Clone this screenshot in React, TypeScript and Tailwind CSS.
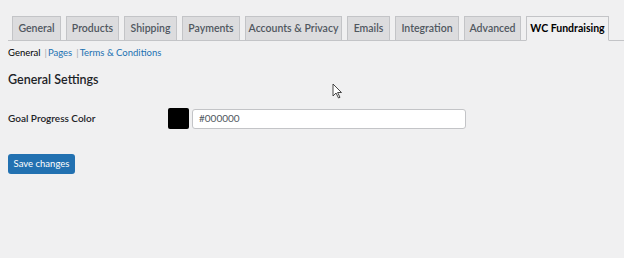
const tabs = [
  { label: 'General', w: 'w-[49px]' },
  { label: 'Products', w: 'w-[53px]' },
  { label: 'Shipping', w: 'w-[53px]' },
  { label: 'Payments', w: 'w-[58px]' },
  { label: 'Accounts & Privacy', w: 'w-[97px]' },
  { label: 'Emails', w: 'w-[43px]' },
  { label: 'Integration', w: 'w-[64px]' },
  { label: 'Advanced', w: 'w-[57px]' },
]

function Cursor() {
  return (
    <svg className="absolute left-[332px] top-[83px]" width="11" height="16" viewBox="0 0 11 16">
      <path d="M1 1 L1 13 L4 10 L6.5 15 L8 14.3 L5.6 9.5 L9.5 9.5 Z" fill="#fff" stroke="#333" strokeWidth="0.9" strokeLinejoin="round" />
    </svg>
  )
}

export default function App() {
  return (
    <div
      className="relative h-[258px] w-[624px] overflow-hidden bg-[#f0f0f1] text-[#1d2327]"
      style={{ fontFamily: 'Lato, "Noto Sans", sans-serif' }}>
      <div className="mt-[16px] ml-[8px] flex items-end gap-[5px] border-b border-[#c3c4c7] pl-[4px]">
        {tabs.map((t) => (
          <div
            key={t.label}
            className={`${t.w} -mb-px flex h-[25px] items-center justify-center border border-[#c3c4c7] bg-[#dcdcde] text-[10.5px] font-semibold whitespace-nowrap text-[#50575e]`}>
            {t.label}
          </div>
        ))}
        <div className="-mb-px flex h-[25px] w-[83px] items-center justify-center border border-b-[#f0f0f1] border-[#c3c4c7] bg-[#f0f0f1] text-[10.5px] font-bold whitespace-nowrap text-black">
          WC Fundraising
        </div>
      </div>

      <div className="mt-[5px] ml-[8px] flex items-center text-[9.5px] leading-[14px]">
        <span className="text-black">General</span>
        <span className="ml-[4px] mr-[1px] text-[#a7aaad]">|</span>
        <span className="text-[#2271b1]">Pages</span>
        <span className="ml-[4px] mr-[1px] text-[#a7aaad]">|</span>
        <span className="text-[#2271b1]">Terms &amp; Conditions</span>
      </div>

      <h2 className="mt-[11px] ml-[8px] text-[12.5px] leading-[18px] font-semibold text-[#1d2327]">General Settings</h2>

      <div className="mt-[19px] ml-[8px] flex items-center">
        <div className="w-[160px] text-[10px] font-semibold text-[#1d2327]">Goal Progress Color</div>
        <div className="h-[21px] w-[21px] rounded-[2px] bg-black" />
        <div className="ml-[3px] flex h-[20px] w-[274px] items-center rounded-[3px] border border-[#c3c4c7] bg-white pl-[6px] text-[10px] text-[#50575e]">
          #000000
        </div>
      </div>

      <button className="mt-[25px] ml-[8px] flex h-[20px] w-[67px] items-center justify-center rounded-[3px] bg-[#2271b1] text-[9.5px] text-white">
        Save changes
      </button>

      <Cursor />
    </div>
  )
}
